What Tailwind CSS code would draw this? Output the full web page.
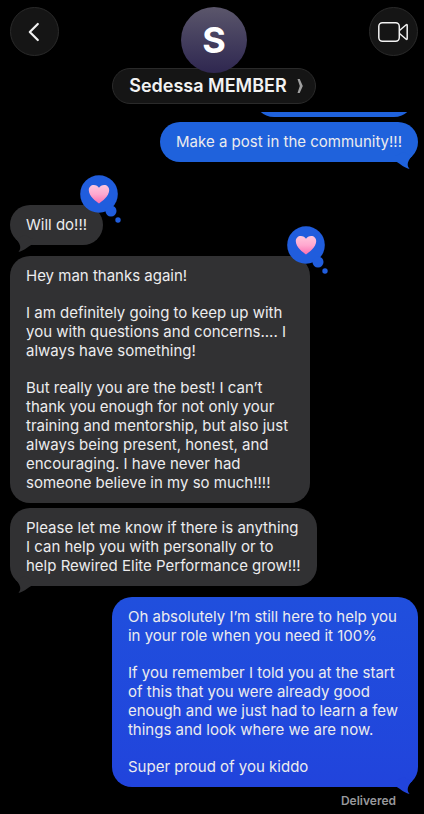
<!DOCTYPE html>
<html lang="en">
<head>
<meta charset="utf-8">
<meta name="viewport" content="width=device-width, initial-scale=1">
<title>Messages</title>
<script src="https://cdn.jsdelivr.net/npm/@tailwindcss/browser@4"></script>
</head>
<body class="bg-black font-['Inter','Liberation_Sans',sans-serif] text-[#ececee]">
<svg class="absolute size-0" aria-hidden="true">
  <defs>
    <linearGradient id="pink" x1="0" y1="0" x2="0" y2="1">
      <stop offset="0" stop-color="#ffc6dc"/><stop offset="0.5" stop-color="#ffa8cf"/><stop offset="1" stop-color="#fb6fb0"/>
    </linearGradient>
    <symbol id="tail" viewBox="0 0 24 18">
      <path d="M1 10C5 11.500 9 16.500 15.500 18C13.300 15 12.300 12 17.500 5.500L10 1L1 5Z" fill="currentColor"/>
    </symbol>
    <symbol id="reaction" viewBox="0 0 41 48">
      <circle cx="19" cy="19" r="18.800" fill="#205ddd"/>
      <circle cx="31" cy="36" r="5.500" fill="#205ddd"/>
      <circle cx="38" cy="45" r="2.700" fill="#205ddd"/>
      <path d="M19 28.500C16 26.500 8.800 21 8.800 15.300C8.800 12 11 10 13.800 10C16.200 10 18 11.200 19 12.800C20 11.200 21.800 10 24.200 10C27 10 29.200 12 29.200 15.300C29.200 21 22 26.500 19 28.500Z" fill="url(#pink)"/>
    </symbol>
  </defs>
</svg>

<header class="flex items-start justify-between pt-[7px] pr-[6px] pb-2 pl-[10px]">
  <button type="button" aria-label="Back" class="flex size-[49px] items-center justify-center rounded-full border border-[#2a2a2a] bg-[#151515]">
    <svg width="14" height="20" viewBox="0 0 14 20" fill="none" stroke="#f2f2f2" stroke-width="2.200" stroke-linecap="round" stroke-linejoin="round"><path d="M9.800 2L1.800 10L9.800 18"/></svg>
  </button>
  <div class="flex flex-col items-center">
    <div class="z-10 flex size-[66px] items-center justify-center rounded-full bg-linear-to-b from-[#5b566b] to-[#2f2750] text-4xl font-bold text-white">S</div>
    <button type="button" class="-mt-[5px] flex h-9 items-center gap-[10px] rounded-full border border-[#2a2a2a] bg-[#151515] pr-3 pl-4">
      <span class="text-lg font-semibold text-[#f2f2f2]">Sedessa MEMBER</span>
      <svg width="6" height="14" viewBox="0 0 6 14" fill="#a0a0a0" aria-hidden="true"><path d="M0.500 0H2.700L5.800 7L2.700 14H0.500L2.800 7Z"/></svg>
    </button>
  </div>
  <button type="button" aria-label="Video call" class="flex size-[49px] items-center justify-center rounded-full border border-[#2a2a2a] bg-[#151515]">
    <svg width="30" height="20" viewBox="0 0 30 20" fill="none" stroke="#f2f2f2" stroke-width="1.500" stroke-linejoin="round"><rect x="0.800" y="0.800" width="20.500" height="18.400" rx="3.600"/><path d="M21.500 8.500L28.200 2.800Q29.200 2.200 29.200 3.400V16.600Q29.200 17.800 28.200 17.200L21.500 11.500"/></svg>
  </button>
</header>

<main class="flex flex-col pr-[6px] pl-[10px] text-[15px] leading-[19px]">
  <div class="mr-1 flex h-[5px] items-end self-end overflow-hidden" aria-hidden="true">
    <div class="h-10 w-40 shrink-0 rounded-[20px] bg-[#1f62dc]"></div>
  </div>

  <div class="relative mt-[5px] self-end rounded-[20px] bg-[#1f62dc] px-[16px] pt-[10px] pb-[11px]">
    <p>Make a post in the community!!!</p>
    <svg class="absolute right-0 -bottom-[7px] h-[18px] w-6 text-[#1f62dc]" aria-hidden="true"><use href="#tail"/></svg>
  </div>

  <div class="relative mt-[43px] self-start rounded-[20px] bg-[#313133] px-[16px] pt-[10px] pb-[11px]">
    <p>Will do!!!</p>
    <svg class="absolute -bottom-[7px] left-0 h-[18px] w-6 -scale-x-100 text-[#313133]" aria-hidden="true"><use href="#tail"/></svg>
    <svg class="absolute -top-[30px] -right-[18px] h-12 w-[41px]" role="img" aria-label="Loved"><use href="#reaction"/></svg>
  </div>

  <div class="relative mt-[11px] flex flex-col gap-[18px] self-start rounded-[20px] bg-[#313133] pt-[10px] pr-[22px] pb-[11px] pl-[16px]">
    <p>Hey man thanks again!</p>
    <p>I am definitely going to keep up with<br>you with questions and concerns.... I<br>always have something!</p>
    <p>But really you are the best! I can’t<br>thank you enough for not only your<br>training and mentorship, but also just<br>always being present, honest, and<br>encouraging. I have never had<br>someone believe in my so much!!!!</p>
    <svg class="absolute -top-[30px] -right-[18px] h-12 w-[41px]" role="img" aria-label="Loved"><use href="#reaction"/></svg>
  </div>

  <div class="relative mt-[5px] self-start rounded-[20px] bg-[#313133] px-[16px] pt-[10px] pb-[11px]">
    <p>Please let me know if there is anything<br>I can help you with personally or to<br>help Rewired Elite Performance grow!!!</p>
    <svg class="absolute -bottom-[7px] left-0 h-[18px] w-6 -scale-x-100 text-[#313133]" aria-hidden="true"><use href="#tail"/></svg>
  </div>

  <div class="relative mt-[11px] flex flex-col gap-[18px] self-end rounded-[20px] bg-linear-to-b from-[#204fdd] to-[#2144dc] pt-[10px] pr-[20px] pb-[11px] pl-[16px]">
    <p>Oh absolutely I’m still here to help you<br>in your role when you need it 100%</p>
    <p>If you remember I told you at the start<br>of this that you were already good<br>enough and we just had to learn a few<br>things and look where we are now.</p>
    <p>Super proud of you kiddo</p>
    <svg class="absolute right-0 -bottom-[7px] h-[18px] w-6 text-[#2144dc]" aria-hidden="true"><use href="#tail"/></svg>
  </div>
  <p class="mt-[6px] mr-[22px] self-end text-xs leading-4 font-semibold text-[#98989c]">Delivered</p>
</main>
</body>
</html>
